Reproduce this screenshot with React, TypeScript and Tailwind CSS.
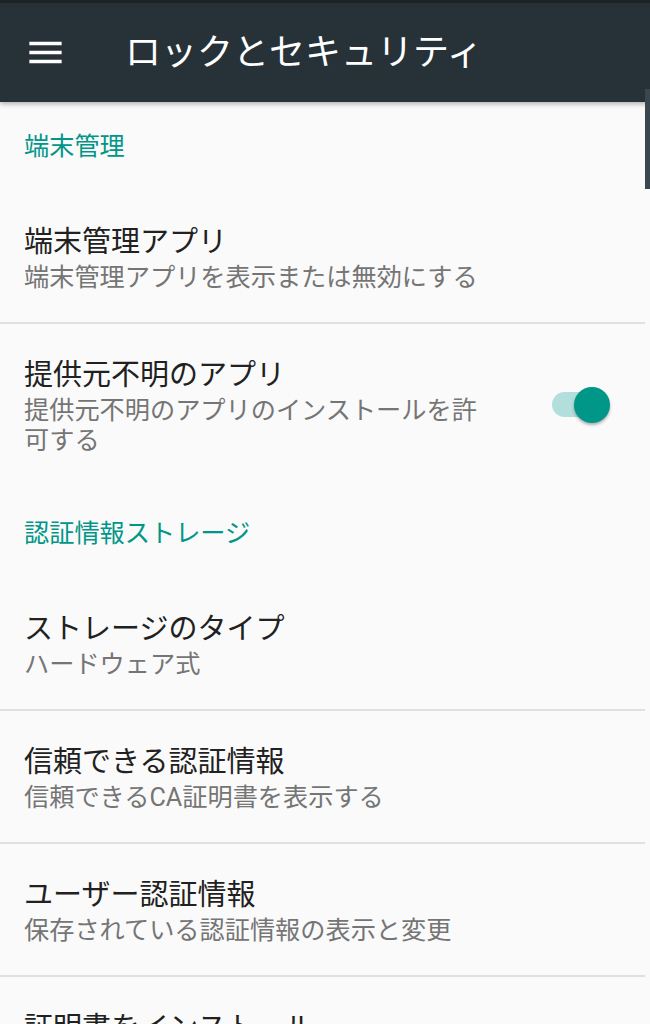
import React from "react";

const font = "font-['Roboto','Noto_Sans_CJK_JP',sans-serif]";

function MenuIcon() {
  return (
    <svg viewBox="0 0 24 24" className="h-[43px] w-[43px]" fill="#ffffff">
      <path d="M3 18h18v-2H3v2zm0-5h18v-2H3v2zm0-7v2h18V6H3z" />
    </svg>
  );
}

function Category({ label, top }: { label: string; top: string }) {
  return (
    <div className={`${top} pb-[29px] pl-[24px]`}>
      <div className="text-[25.2px] leading-[30px] text-[#009688]">{label}</div>
    </div>
  );
}

function Row({
  title,
  summary,
  toggle,
  divider,
}: {
  title: string;
  summary?: string;
  toggle?: boolean;
  divider?: boolean;
}) {
  return (
    <>
      <div className="flex items-center pl-[24px] pr-[40px]">
        <div className="w-[466px] pt-[32px] pb-[29px]">
          <div className="text-[29px] leading-[38px] text-[#212121]">{title}</div>
          {summary && (
            <div className="mt-[2px] text-[25.2px] leading-[30px] text-[#757575]">{summary}</div>
          )}
        </div>
        {toggle && (
          <div className="ml-auto relative h-[36px] w-[58px]">
            <div className="absolute left-0 top-[5.5px] h-[25px] w-[54px] rounded-full bg-[#b2dfdb]" />
            <div className="absolute right-0 top-0 h-[36px] w-[36px] rounded-full bg-[#009688] shadow-[0_2px_3px_rgba(0,0,0,0.3)]" />
          </div>
        )}
      </div>
      {divider && <div className="mr-[5px] h-[2px] bg-[#e0e0e0]" />}
    </>
  );
}

export default function App() {
  return (
    <div className={`${font} relative h-[1024px] w-[650px] overflow-hidden bg-[#fafafa]`}>
      <div className="relative z-10 shadow-[0_2px_5px_rgba(0,0,0,0.3)]">
        <div className="h-[3px] bg-[#1b2327]" />
        <div className="flex h-[99px] items-center bg-[#263238]">
          <div className="ml-[24px] flex items-center">
            <MenuIcon />
          </div>
          <div className="ml-[58px] text-[36px] leading-[44px] text-white">ロックとセキュリティ</div>
        </div>
      </div>

      <Category label="端末管理" top="pt-[30px]" />
      <Row title="端末管理アプリ" summary="端末管理アプリを表示または無効にする" divider />
      <Row title="提供元不明のアプリ" summary="提供元不明のアプリのインストールを許可する" toggle />

      <Category label="認証情報ストレージ" top="pt-[34px]" />
      <Row title="ストレージのタイプ" summary="ハードウェア式" divider />
      <Row title="信頼できる認証情報" summary="信頼できるCA証明書を表示する" divider />
      <Row title="ユーザー認証情報" summary="保存されている認証情報の表示と変更" divider />
      <Row title="証明書をインストール" summary="ストレージからインストールする" divider />

      <div className="absolute right-0 top-[89px] z-20 h-[100px] w-[5px] bg-[#3a474e]" />
    </div>
  );
}
